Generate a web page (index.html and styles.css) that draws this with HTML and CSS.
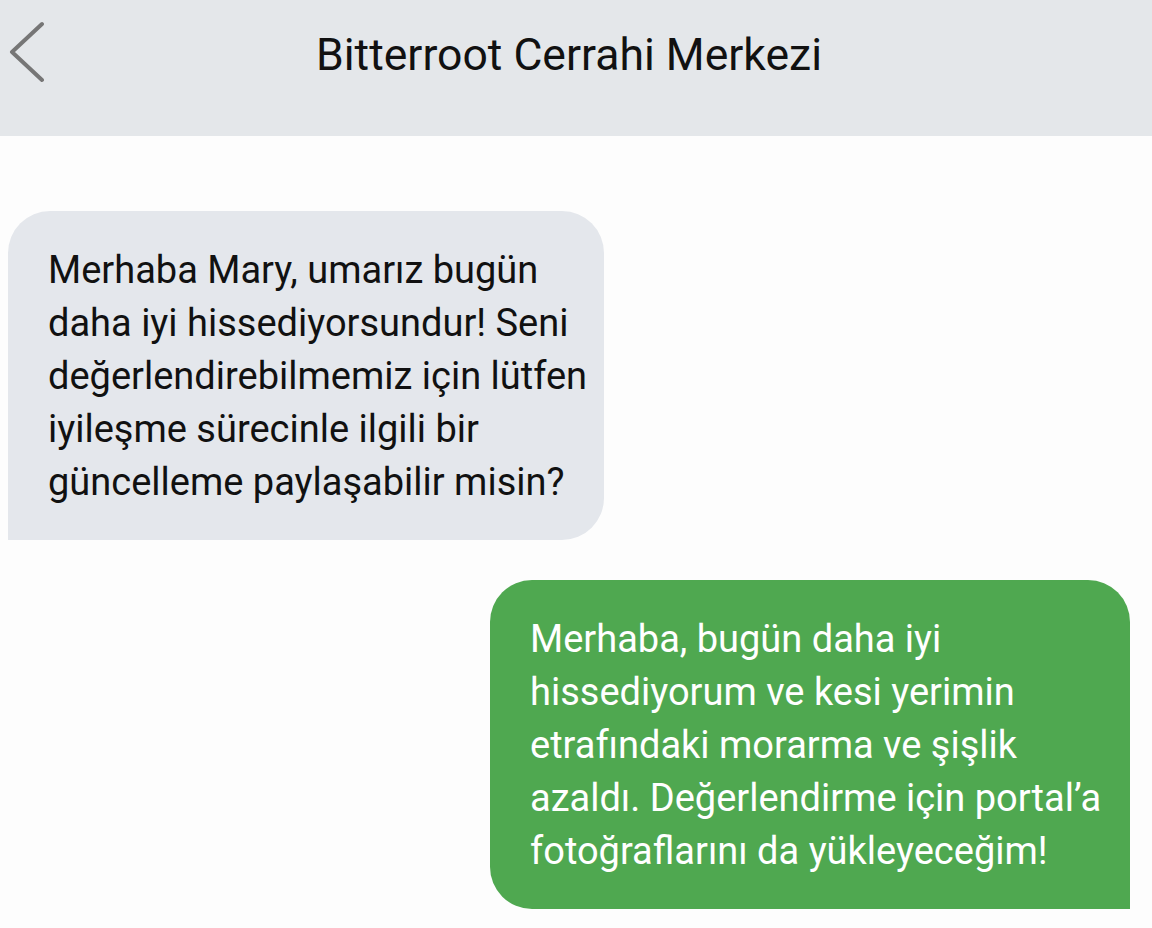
FILE: index.html
```html
<!DOCTYPE html>
<html lang="tr">
<head>
<meta charset="utf-8">
<link rel="stylesheet" href="styles.css">
</head>
<body>
<header class="topbar">
  <svg class="back" width="40" height="64" viewBox="0 0 40 64"><path d="M38 4 L8 32 L38 60" fill="none" stroke="#767676" stroke-width="4" stroke-linecap="round" stroke-linejoin="round"/></svg>
  <h1 class="title">Bitterroot Cerrahi Merkezi</h1>
</header>
<main class="chat">
  <div class="bubble incoming">Merhaba Mary, umarız bugün<br>daha iyi hissediyorsundur! Seni<br>değerlendirebilmemiz için lütfen<br>iyileşme sürecinle ilgili bir<br>güncelleme paylaşabilir misin?</div>
  <div class="bubble outgoing">Merhaba, bugün daha iyi<br>hissediyorum ve kesi yerimin<br>etrafındaki morarma ve şişlik<br>azaldı. Değerlendirme için portal’a<br>fotoğraflarını da yükleyeceğim!</div>
</main>
</body>
</html>
```

FILE: styles.css
```css
html, body {
  margin: 0;
  padding: 0;
  background: #fdfdfd;
  font-family: Roboto, "Liberation Sans", Arial, sans-serif;
}
.topbar {
  height: 136px;
  background: #e4e7ea;
  position: relative;
  display: flex;
  justify-content: center;
  padding-right: 14px;
  box-sizing: border-box;
}
.back {
  position: absolute;
  left: 4px;
  top: 20px;
}
.title {
  margin: 0;
  padding-top: 27px;
  font-size: 44.5px;
  font-weight: 400;
  line-height: 56px;
  color: #111;
}
.chat {
  display: flex;
  flex-direction: column;
  gap: 40px;
  padding: 75px 22px 0 8px;
}
.bubble {
  box-sizing: border-box;
  font-size: 38px;
  line-height: 53px;
  padding: 33px 0 31px 40px;
  border-radius: 42px;
  white-space: nowrap;
}
.incoming {
  align-self: flex-start;
  width: 596px;
  background: #e4e7ec;
  color: #111;
  border-bottom-left-radius: 0;
}
.outgoing {
  align-self: flex-end;
  width: 640px;
  background: #4fa850;
  color: #fff;
  border-bottom-right-radius: 0;
}
```
